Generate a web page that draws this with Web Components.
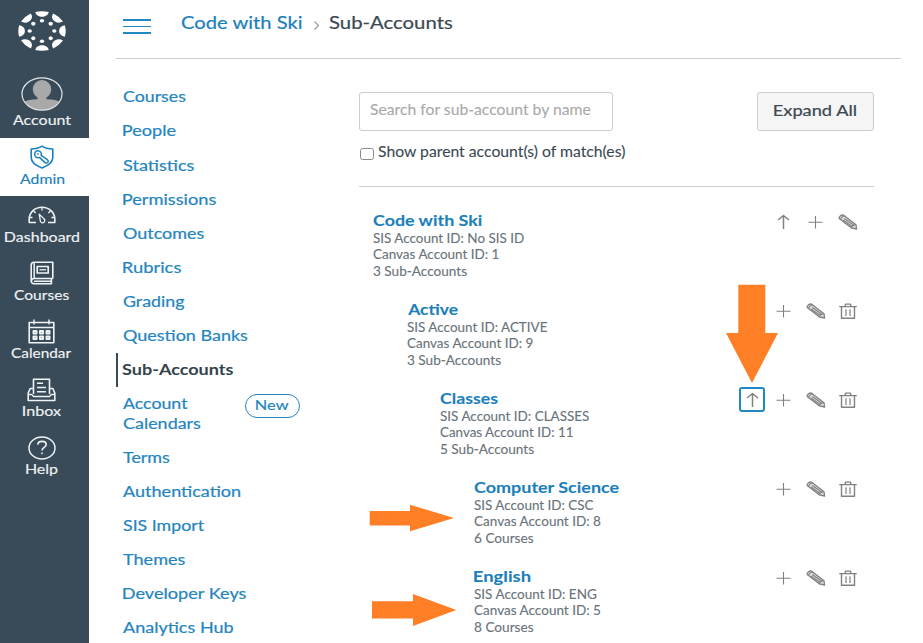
<!DOCTYPE html>
<html lang="en">
<head>
<meta charset="utf-8">
<title>Sub-Accounts</title>
<style>
  html, body { margin: 0; height: 100%; overflow: hidden; background: #fff; }
  body { font-family: Lato, "Liberation Sans", sans-serif; color: #3b4852; }
</style>
</head>
<body>
<sub-accounts-page></sub-accounts-page>
<script>
const ctx = document.createElement('canvas').getContext('2d');

/* Text stretched horizontally so that its ink is exactly `w` pixels wide. */
class WideText extends HTMLElement {
  connectedCallback() {
    if (this.shadowRoot) return;
    this.attachShadow({ mode: 'open' }).innerHTML = `<style>
      :host { display: block; white-space: nowrap; flex: none; }
      span { display: inline-block; transform-origin: 0 50%; -webkit-text-stroke: var(--weight, .2px) currentColor; }
    </style><span><slot></slot></span>`;
    const w = +this.getAttribute('w');
    const cs = getComputedStyle(this);
    ctx.font = `${cs.fontWeight} ${cs.fontSize} ${cs.fontFamily}`;
    const m = ctx.measureText(this.textContent);
    const k = w / (m.actualBoundingBoxRight + m.actualBoundingBoxLeft);
    this.style.width = w + 'px';
    this.shadowRoot.querySelector('span').style.transform =
      `translateX(${m.actualBoundingBoxLeft * k}px) scaleX(${k})`;
  }
}
customElements.define('wide-text', WideText);

const ICONS = {
  admin: [24, 24, `<path d="M12 1.2C9 3.2 5 4 1.2 4v8.5c0 5.500 5.500 8.500 10.800 10.500 5.300-2 10.800-5 10.800-10.500V4C19 4 15 3.200 12 1.200z" stroke-width="1.600"/><path d="M11.200 10.300c.8-2.400-1-4.600-3.400-4.500-2.500.1-3.800 2.700-2.800 4.900.9 1.900 2.900 2.300 4.500 1.700l5.200 5c1.200 1 2.900.8 3.400-.4.4-.9 0-1.700-.8-2.300z" stroke-width="1.500"/><path d="M7 8.500l1.500 1" stroke-width="1.400"/>`],
  dashboard: [28, 18, `<path d="M8 16.500H1.200v-3.200C1.200 6.500 7 1.200 14 1.200S26.800 6.500 26.800 13.300v3.200H20" stroke-width="1.600"/><path d="M11.200 8.200l1 6a2.300 2.300 0 1 0 3.600-1.600z M14 1.500v3 M5.500 5l2.200 2 M22.500 5l-2.200 2 M1.500 11.500h3 M23.500 11.500h3" stroke-width="1.300"/>`],
  courses: [24, 24, `<path d="M22.800 17.500V1.200H4C2.400 1.200 1.200 2.300 1.200 4v15.500c0 1.800 1.200 3.300 3 3.300h17.200v-5" stroke-width="1.600"/><path d="M22.800 17.500H4c-1.600 0-2.600 1-2.600 2.500M4.200 2v15.500 M4 20.200h17" stroke-width="1.500"/><path d="M7.200 5.500h11v6.500h-11z" stroke-width="1.700"/><path d="M9.500 8.800h6.500" stroke-width="1.300"/>`],
  calendar: [27, 25, `<path d="M1.200 3.500h24.600v20.300H1.200z" stroke-width="1.600"/><path d="M1.200 8.500h24.600M6 .5v5M21 .5v5" stroke-width="1.500"/><path d="M5.500 12h3v2.500h-3zM12 12h3v2.500h-3zM18.500 12h3v2.500h-3zM5.500 17.500h3V20h-3zM12 17.500h3V20h-3zM18.500 17.500h3V20h-3z" stroke-width="2"/>`],
  inbox: [29, 24, `<path d="M6.500 10.500H3.200L1.200 15v7.500h26.600V15l-2-4.500h-3.300" stroke-width="1.600"/><path d="M1.200 16.500h3.500l1.800 2h16l1.800-2h3.500" stroke-width="1.300"/><path d="M6.500 16V1.200h16V16" stroke-width="1.600"/><path d="M10 5.200h6M10 9.500h9M10 13.800h9" stroke-width="1.500"/>`],
  help: [28, 24, `<ellipse cx="14" cy="12" rx="13" ry="11" stroke-width="1.500"/><path d="M9.800 8.800c0-4.700 8.400-4.500 8.400-.2 0 3-4.200 2.600-4.200 6" stroke-width="1.600"/><circle cx="14" cy="17.300" r=".6" stroke-width="1"/>`],
  up: [13, 16, `<path d="M6.500 15V1.500M1 6l5.500-4.500L12 6" stroke-width="1.500"/>`],
  plus: [15, 14, `<path d="M7.500 1v12.500M.5 7.200h14" stroke-width="1.100"/>`],
  pencil: [20, 16, `<path d="M6 1.400C3.800.2.400 2.300 1.200 4.500l12 9.300 5.400 1.200-.6-4.200z" fill="#ddd" stroke-width="1.300"/><path d="M7 2c-2.700.3-4.200 1.700-4.300 3.600M13.200 13.800c.6-2 2.400-3.200 4.800-3M5 6l9.500 6.700M6.300 4.500l10 7" stroke-width="1.100"/>`],
  trash: [18, 16, `<path d="M.2 3.600h17.600M6 3.400l.6-2.300h4.800l.6 2.300M2.500 3.800v11.400h13V3.800" stroke-width="1.400"/><path d="M7 6.300v6.700M11 6.300v6.700" stroke-width="1.200"/>`]
};

class LineIcon extends HTMLElement {
  connectedCallback() {
    const [w, h, body] = ICONS[this.getAttribute('name')];
    this.shadowRoot || this.attachShadow({ mode: 'open' });
    this.shadowRoot.innerHTML = `<style>
      :host { display: block; flex: none; }
      svg { display: block; overflow: visible; }
    </style><svg width="${w}" height="${h}" viewBox="0 0 ${w} ${h}" fill="none" stroke="currentColor" stroke-linejoin="round">${body}</svg>`;
  }
}
customElements.define('line-icon', LineIcon);

class CanvasLogo extends HTMLElement {
  connectedCallback() {
    let s = '';
    for (let i = 0; i < 8; i++)
      s += `<g transform="rotate(${i * 45})"><path d="M-6.800-22.800Q0-24.600 6.800-22.800C5.500-15.200-5.500-15.200-6.800-22.800z"/><circle cy="-12.300" r="2.200"/></g>`;
    this.attachShadow({ mode: 'open' }).innerHTML = `<style>
      :host { display: block; } svg { display: block; }
    </style><svg width="48" height="40" viewBox="-24 -24 48 48" preserveAspectRatio="none" fill="#fff">${s}</svg>`;
  }
}
customElements.define('canvas-logo', CanvasLogo);

class NavItem extends HTMLElement {
  connectedCallback() {
    this.attachShadow({ mode: 'open' }).innerHTML = `<style>
      :host { display: flex; flex-direction: column; align-items: center; height: 58.2px; box-sizing: border-box;
        padding: 7px 5.500px 0 0; color: #f0f3f5; font-size: 14.200px; line-height: 18px; --weight: .15px; }
      :host([active]) { background: #fff; color: #1b7fbb; }
      .icon { height: 25px; display: flex; align-items: center; }
    </style><div class="icon"><line-icon name="${this.getAttribute('icon')}"></line-icon></div>
    <wide-text w="${this.getAttribute('w')}">${this.getAttribute('label')}</wide-text>`;
  }
}
customElements.define('nav-item', NavItem);

class GlobalNav extends HTMLElement {
  connectedCallback() {
    this.attachShadow({ mode: 'open' }).innerHTML = `<style>
      :host { display: flex; flex-direction: column; width: 89px; height: 643px; background: #394b58; color: #f0f3f5; --weight: .15px; }
      .top { height: 137.500px; box-sizing: border-box; padding: 11px 6px 0 0; display: flex; flex-direction: column; align-items: center;
        font-size: 14.200px; line-height: 18px; }
      .avatar { display: block; margin: 26px 0 0; }
    </style>
    <div class="top"><canvas-logo></canvas-logo>
      <svg class="avatar" width="42" height="34" viewBox="0 0 42 34"><defs><clipPath id="c"><ellipse cx="21" cy="17" rx="19.500" ry="16"/></clipPath></defs>
        <ellipse cx="21" cy="17" rx="20" ry="16.200" fill="#394b58"/>
        <g clip-path="url(#c)" fill="#a9a9a9"><ellipse cx="21" cy="12.300" rx="9.200" ry="9.300"/><path d="M16.500 19h9v3.200c6 0 11.500 1 15.500 3.800v8H1v-8c4-2.800 9.500-3.800 15.500-3.800z"/></g>
        <ellipse cx="21" cy="17" rx="20" ry="16.200" fill="none" stroke="#e4e8ea" stroke-width="1.200"/></svg>
      <wide-text w="58">Account</wide-text></div>
    <nav-item active icon="admin" w="44" label="Admin"></nav-item>
    <nav-item icon="dashboard" w="74" label="Dashboard"></nav-item>
    <nav-item icon="courses" w="55" label="Courses"></nav-item>
    <nav-item icon="calendar" w="61" label="Calendar"></nav-item>
    <nav-item icon="inbox" w="38" label="Inbox"></nav-item>
    <nav-item icon="help" w="32" label="Help"></nav-item>`;
  }
}
customElements.define('global-nav', GlobalNav);

class PageHeader extends HTMLElement {
  connectedCallback() {
    this.attachShadow({ mode: 'open' }).innerHTML = `<style>
      :host { display: flex; height: 59px; box-sizing: border-box; border-bottom: 1.500px solid #c7cdd1; padding: 13px 0 0 7px; font-size: 16.600px; line-height: 21px; }
      .menu { width: 27.500px; height: 15px; margin: 6px 30.500px 0 0; display: flex; flex-direction: column; justify-content: space-between; }
      .menu i { height: 1.600px; background: #2387c1; }
      wide-text:first-of-type { color: #1b7fbb; }
      svg { margin: 7.500px 10.500px 0 10.500px; }
    </style><div class="menu"><i></i><i></i><i></i></div>
    <wide-text w="122">Code with Ski</wide-text>
    <svg width="5" height="9" viewBox="0 0 5 9" fill="none" stroke="#8b969e" stroke-width="1.100"><path d="M.5.5l4 4-4 4"/></svg>
    <wide-text w="123.500">Sub-Accounts</wide-text>`;
  }
}
customElements.define('page-header', PageHeader);

class SectionMenu extends HTMLElement {
  connectedCallback() {
    const items = [['Courses', 62.5], ['People', 53.5], ['Statistics', 71], ['Permissions', 93], ['Outcomes', 81], ['Rubrics', 58],
      ['Grading', 62], ['Question Banks', 124.5], ['Sub-Accounts', 111], ['Account', 65.5, 'Calendars', 77.5], ['Terms', 46.5],
      ['Authentication', 118], ['SIS Import', 82], ['Themes', 62], ['Developer Keys', 123.5], ['Analytics Hub', 110.5]];
    this.attachShadow({ mode: 'open' }).innerHTML = `<style>
      :host { display: block; width: 243px; flex: none; box-sizing: border-box; padding-top: 21px; font-size: 14.500px; line-height: 19.400px; color: #2585bf; }
      .item { padding: 7.350px 0 7.350px 7px; display: flex; box-sizing: border-box; }
      .lines { width: 122px; }
      .current { color: #35434d; font-weight: 700; padding-left: 4px; border-left: 2px solid #394b58; --weight: 0; }
      .pill { box-sizing: border-box; width: 54.500px; height: 24px; margin: -.500px 0 -4.500px; border: 1.500px solid #2585bf; border-radius: 12px;
        display: flex; justify-content: center; font-size: 14px; line-height: 19px; }
    </style>` + items.map(([a, w, b, w2]) => `<div class="item ${a === 'Sub-Accounts' ? 'current' : ''}"><div class="lines"><wide-text w="${w}">${a}</wide-text>${
      b ? `<wide-text w="${w2}">${b}</wide-text>` : ''}</div>${b ? '<div class="pill"><wide-text w="32.500">New</wide-text></div>' : ''}</div>`).join('');
  }
}
customElements.define('section-menu', SectionMenu);

class SearchBar extends HTMLElement {
  connectedCallback() {
    this.attachShadow({ mode: 'open' }).innerHTML = `<style>
      :host { display: block; height: 128px; box-sizing: border-box; padding-top: 33px; border-bottom: 1.500px solid #c7cdd1; }
      .row { display: flex; justify-content: space-between; }
      .field, .button { box-sizing: border-box; height: 38.500px; border: 1.500px solid #c7cdd1; border-radius: 3px; display: flex; }
      .field { width: 254px; border-color: #ccc; padding: 7px 0 0 9.500px; font-size: 15px; line-height: 19px; color: #a9a9a9; --weight: .1px; }
      .button { width: 117px; justify-content: center; background: #f5f5f5; font-size: 15px; line-height: 35px; }
      .check { display: flex; margin-top: 11px; font-size: 14.800px; line-height: 19px; --weight: .1px; }
      .box { box-sizing: border-box; width: 14px; height: 11.500px; margin: 6.500px 4.500px 0 .5px; border: 1.300px solid #8c8c8c; border-radius: 2.500px; }
    </style>
    <div class="row"><div class="field"><wide-text w="221.500">Search for sub-account by name</wide-text></div>
      <div class="button"><wide-text w="83">Expand All</wide-text></div></div>
    <div class="check"><div class="box"></div><wide-text w="248">Show parent account(s) of match(es)</wide-text></div>`;
  }
}
customElements.define('search-bar', SearchBar);

class AccountRow extends HTMLElement {
  connectedCallback() {
    const d = JSON.parse(this.getAttribute('data'));
    this.attachShadow({ mode: 'open' }).innerHTML = `<style>
      :host { display: flex; justify-content: space-between; height: 89px; box-sizing: border-box; padding: 0 16px 0 ${13.8 + d.level * 33.8}px; }
      .name { color: #1b7fbb; font-weight: 700; font-size: 15px; line-height: 20px; margin-top: -.5px; --weight: .1px; }
      .details { font-size: 12.700px; line-height: 16.700px; color: #69737b; --weight: .12px; }
      .tools { display: flex; color: #808080; }
      .tool { width: 26.500px; height: 25px; margin: -1px 0 0 5.400px; box-sizing: border-box; border: 2px solid transparent; border-radius: 3px; display: flex; align-items: center; justify-content: center; }
      .focus { border-color: #2387c1; }
      .tool:last-child { margin-right: -3px; }
    </style><div><wide-text class="name" w="${d.name[1]}">${d.name[0]}</wide-text>
      <div class="details">${d.lines.map(l => `<wide-text w="${l[1]}">${l[0]}</wide-text>`).join('')}</div></div>
    <div class="tools">${d.tools.map(t => `<div class="tool ${t === 'up' && d.level ? 'focus' : ''}"><line-icon name="${t}"></line-icon></div>`).join('')}</div>`;
  }
}
customElements.define('account-row', AccountRow);

class AccountTree extends HTMLElement {
  connectedCallback() {
    const all = ['plus', 'pencil', 'trash'];
    const rows = [
      { level: 0, name: ['Code with Ski', 110], lines: [['SIS Account ID: No SIS ID', 152], ['Canvas Account ID: 1', 126.5], ['3 Sub-Accounts', 93.5]], tools: ['up', 'plus', 'pencil'] },
      { level: 1, name: ['Active', 51], lines: [['SIS Account ID: ACTIVE', 141], ['Canvas Account ID: 9', 126.5], ['3 Sub-Accounts', 93.5]], tools: all },
      { level: 2, name: ['Classes', 58.5], lines: [['SIS Account ID: CLASSES', 150], ['Canvas Account ID: 11', 133.5], ['5 Sub-Accounts', 93.5]], tools: ['up', ...all] },
      { level: 3, name: ['Computer Science', 145.5], lines: [['SIS Account ID: CSC', 120.5], ['Canvas Account ID: 8', 127], ['6 Courses', 59]], tools: all },
      { level: 3, name: ['English', 56.5], lines: [['SIS Account ID: ENG', 123], ['Canvas Account ID: 5', 127], ['8 Courses', 59]], tools: all }];
    this.attachShadow({ mode: 'open' }).innerHTML = `<style>:host { display: flow-root; padding-top: 23px; }</style>` +
      rows.map(r => `<account-row data='${JSON.stringify(r)}'></account-row>`).join('');
  }
}
customElements.define('account-tree', AccountTree);

/* Orange pointers drawn over the page. */
class PointerArrows extends HTMLElement {
  connectedCallback() {
    this.attachShadow({ mode: 'open' }).innerHTML = `<style>
      :host { position: absolute; inset: 0; pointer-events: none; } svg { display: block; }
    </style><svg width="923" height="643" fill="#ff7f27">
      <path d="M738.300 284.700h27V333H778l-26 50-26-50h12.300z"/>
      <path d="M369.700 511H410v-6.300L454 518l-44 13.300V525.500h-40.300z"/>
      <path d="M372 601.300h41V594l43.300 16L413 626v-7.500h-41z"/></svg>`;
  }
}
customElements.define('pointer-arrows', PointerArrows);

class SubAccountsPage extends HTMLElement {
  connectedCallback() {
    this.attachShadow({ mode: 'open' }).innerHTML = `<style>
      :host { position: relative; display: flex; width: 923px; height: 643px; overflow: hidden; }
      main { width: 785px; margin-left: 27px; }
      .columns { display: flex; }
      .content { width: 515px; }
    </style><global-nav></global-nav>
    <main><page-header></page-header><div class="columns"><section-menu></section-menu>
      <div class="content"><search-bar></search-bar><account-tree></account-tree></div></div></main>
    <pointer-arrows></pointer-arrows>`;
  }
}
customElements.define('sub-accounts-page', SubAccountsPage);
</script>
</body>
</html>
